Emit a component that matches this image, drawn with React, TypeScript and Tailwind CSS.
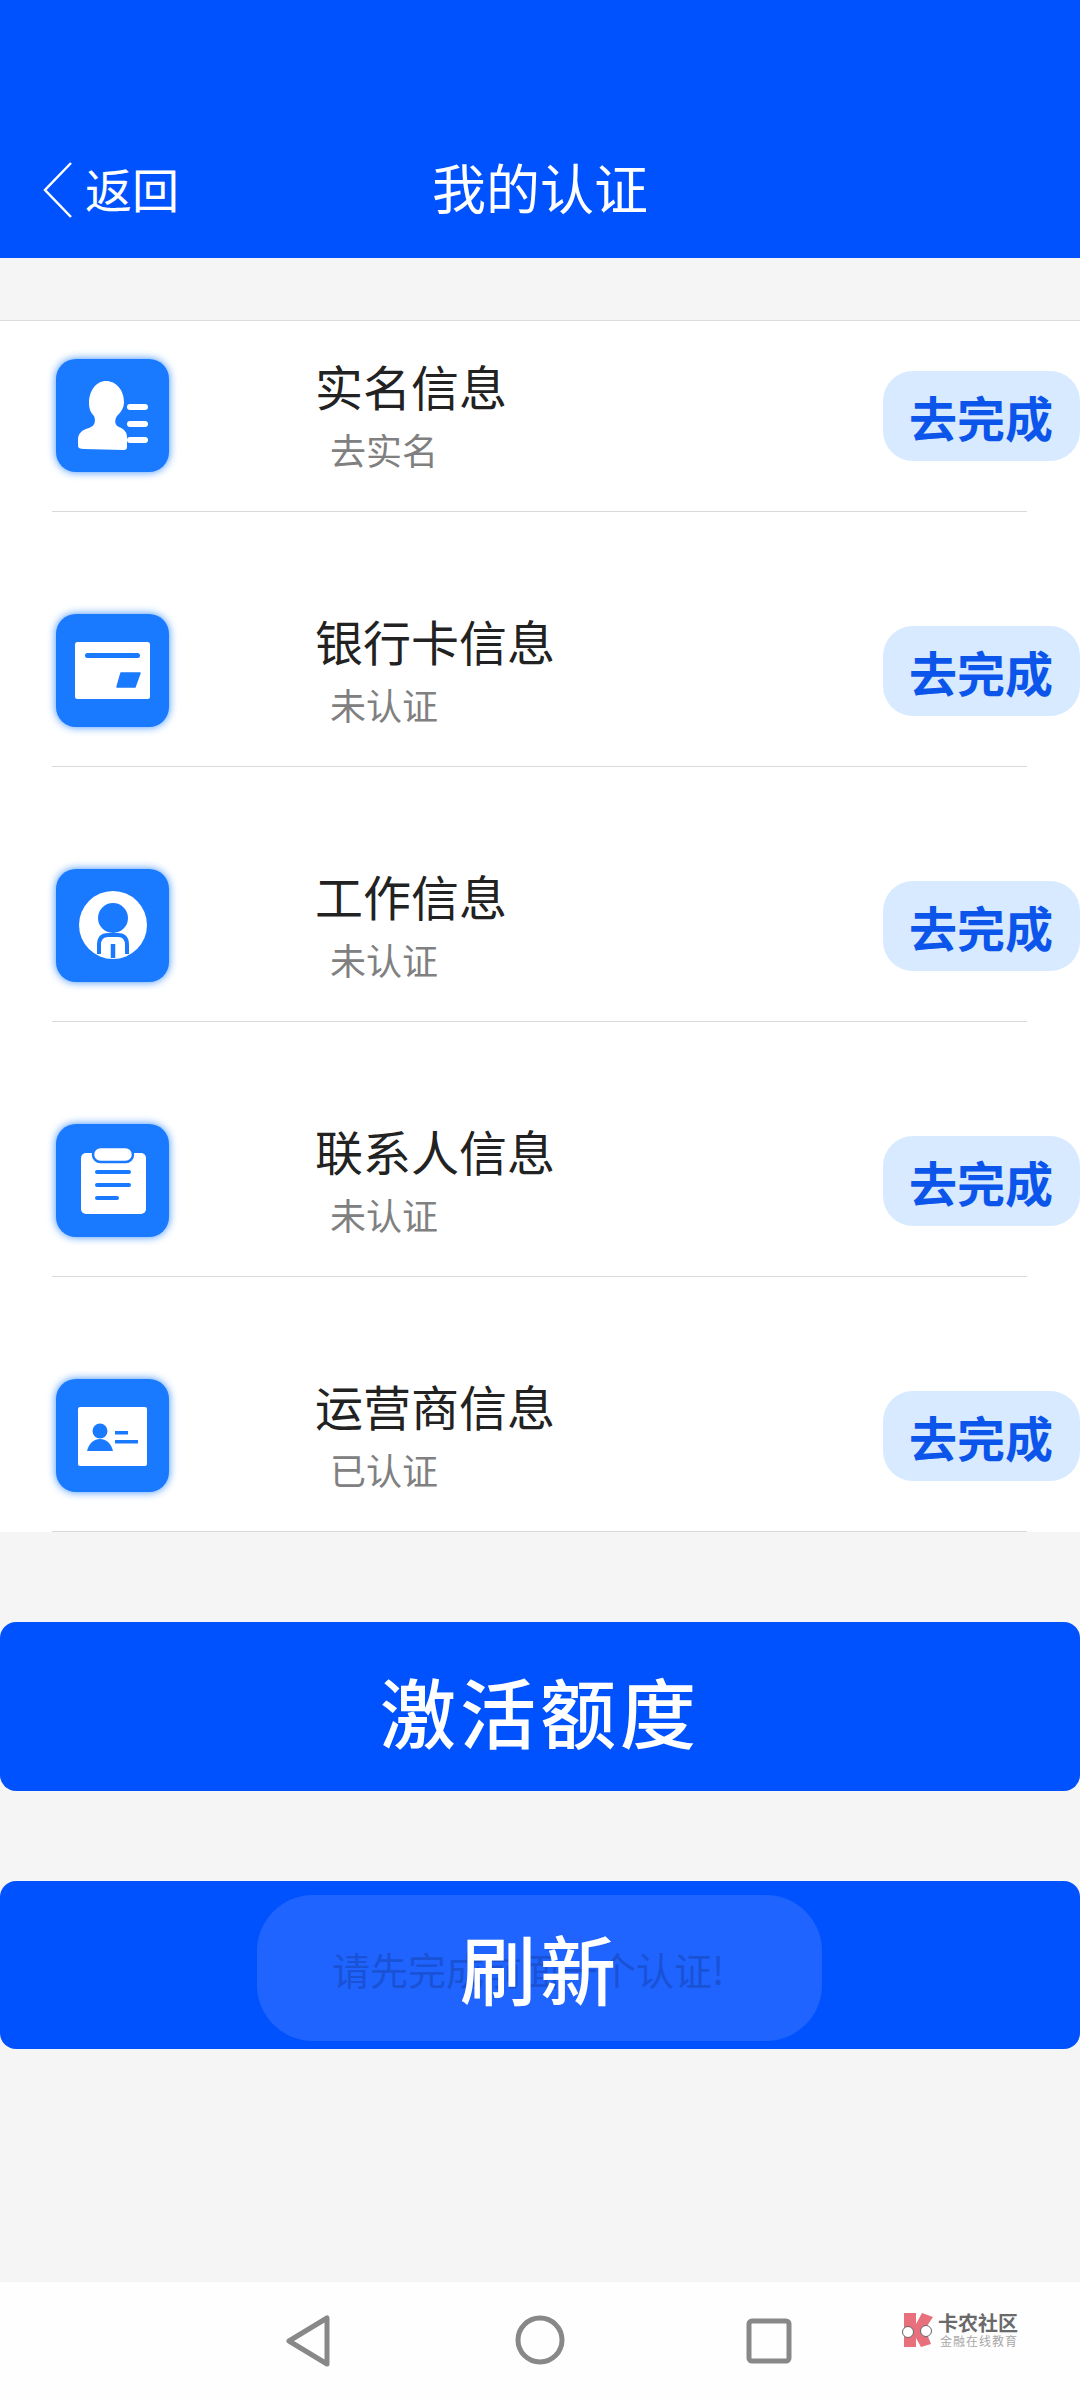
import React from 'react';

const BLUE = '#1a7aff';

const NameIcon = () => (
  <svg viewBox="0 0 113 113" className="w-full h-full">
    <path fill="#fff" d="M50 22C40 22 33 32 33 44C33 50 35 54 38 57C40 62 39 67 33 69C26 71 22 74 22 81V87Q22 90 28 90L68 91Q71 91 71 88V78C71 73 68 70 63 68C59 66 58 62 61 57C65 53 68 49 68 43C68 31 60 22 50 22Z" />
    <rect x="71" y="45" width="21" height="6" rx="3" fill="#fff" />
    <rect x="71" y="62" width="21" height="6" rx="3" fill="#fff" />
    <rect x="71" y="78" width="21" height="6" rx="3" fill="#fff" />
  </svg>
);

const CardIcon = () => (
  <svg viewBox="0 0 113 113" className="w-full h-full">
    <rect x="19" y="28" width="75" height="57" rx="2.5" fill="#fff" />
    <rect x="29" y="39" width="55" height="5" rx="2.5" fill={BLUE} />
    <path fill={BLUE} d="M65 59H84L79 73H61Z" strokeLinejoin="round" stroke={BLUE} strokeWidth="1.5" />
  </svg>
);

const WorkIcon = () => (
  <svg viewBox="0 0 113 113" className="w-full h-full">
    <circle cx="57" cy="56" r="34" fill="#fff" />
    <circle cx="57" cy="49" r="15" fill={BLUE} />
    <path fill="none" stroke={BLUE} strokeWidth="4" d="M43 85V76Q43 66 52 66H62Q71 66 71 76V85" />
    <path fill="none" stroke={BLUE} strokeWidth="4.5" d="M57 75V89" />
  </svg>
);

const ContactIcon = () => (
  <svg viewBox="0 0 113 113" className="w-full h-full">
    <rect x="25" y="29" width="65" height="61" rx="5" fill="#fff" />
    <rect x="37" y="23" width="40" height="15" rx="7.5" fill="#fff" stroke={BLUE} strokeWidth="2.5" />
    <rect x="39" y="46" width="36" height="4" rx="2" fill={BLUE} />
    <rect x="39" y="59" width="36" height="4" rx="2" fill={BLUE} />
    <rect x="39" y="72" width="24" height="4" rx="2" fill={BLUE} />
  </svg>
);

const CarrierIcon = () => (
  <svg viewBox="0 0 113 113" className="w-full h-full">
    <rect x="22" y="28" width="69" height="59" rx="2" fill="#fff" />
    <circle cx="44" cy="52" r="7.5" fill={BLUE} />
    <path fill={BLUE} d="M31 72C33 64 38 60 44 60C50 60 55 64 57 72Z" />
    <rect x="59" y="52" width="13" height="3.5" fill={BLUE} />
    <rect x="59" y="61" width="23" height="3.5" fill={BLUE} />
  </svg>
);

const rows = [
  { title: '实名信息', sub: '去实名', icon: <NameIcon /> },
  { title: '银行卡信息', sub: '未认证', icon: <CardIcon /> },
  { title: '工作信息', sub: '未认证', icon: <WorkIcon /> },
  { title: '联系人信息', sub: '未认证', icon: <ContactIcon /> },
  { title: '运营商信息', sub: '已认证', icon: <CarrierIcon /> },
];

function Row({ title, sub, icon }: { title: string; sub: string; icon: React.ReactNode }) {
  return (
    <div>
      <div className="flex items-center h-[190px] pl-[56px]">
        <div className="w-[113px] h-[113px] mb-[2px] rounded-[20px] bg-[#1a7aff] shadow-[0_0_8px_#3d8fff] shrink-0">
          {icon}
        </div>
        <div className="ml-[147px] mb-[6px] flex-1">
          <div className="text-[48px] leading-[64px] -ml-[1px] text-[#222]">{title}</div>
          <div className="text-[36px] leading-[48px] mt-[8px] ml-[14px] text-[#808080]">{sub}</div>
        </div>
        <div className="w-[197px] h-[90px] rounded-[30px] bg-[#d8eaff] flex items-center pl-[26px] text-[48px] font-bold text-[#0c55ea]">
          去完成
        </div>
      </div>
      <div className="ml-[52px] w-[975px] h-px bg-[#d9d9d9]" />
    </div>
  );
}

export default function App() {
  return (
    <div
      className="w-[1080px] h-[2400px] flex flex-col bg-[#f5f5f5] overflow-hidden"
      style={{ fontFamily: '"Noto Sans CJK SC", sans-serif' }}
    >
      {/* Header */}
      <div className="h-[258px] bg-[#0052fe] shrink-0 relative text-white">
        <div className="absolute left-[43px] top-[160px] flex items-center h-[60px]">
          <svg width="30" height="56" viewBox="0 0 30 56" fill="none" stroke="#fff" strokeWidth="2.5">
            <path d="M28 1L2 28L28 55" />
          </svg>
          <span className="ml-[12px] -mt-[5px] text-[47px] leading-none">返回</span>
        </div>
        <div className="absolute inset-x-0 top-[157px] h-[60px] flex items-center justify-center text-[54px] leading-none">
          我的认证
        </div>
      </div>

      {/* List */}
      <div className="mt-[62px] bg-white border-t border-[#dcdcdc] flex flex-col gap-[64px] shrink-0">
        {rows.map((r) => (
          <Row key={r.title} {...r} />
        ))}
      </div>

      {/* Buttons */}
      <button className="mt-[90px] h-[169px] rounded-[16px] bg-[#0052fe] text-white text-[76px] font-medium tracking-[4px] leading-none shrink-0 pt-[6px]">
        激活额度
      </button>
      <div className="relative mt-[90px] h-[168px] rounded-[16px] bg-[#0052fe] shrink-0 flex items-center justify-center">
        {/* Toast */}
        <div className="absolute left-[257px] top-[14px] w-[565px] h-[146px] rounded-[56px] bg-[#1f64ff] flex items-center pl-[75px] text-[38px] text-[#1a52d6] whitespace-nowrap">
          请先完成前面一个认证!
        </div>
        <span className="relative text-white text-[76px] font-medium tracking-[4px] leading-none mt-[4px]">刷新</span>
      </div>

      {/* Nav bar */}
      <div className="mt-auto h-[118px] bg-[#fefefe] shrink-0 relative flex items-start pl-[285px] pt-[33px] gap-[184px]">
        <svg width="46" height="52" viewBox="0 0 46 52" fill="none" stroke="#888" strokeWidth="5" strokeLinejoin="round">
          <path d="M42 3V49L4 26Z" />
        </svg>
        <svg width="50" height="50" viewBox="0 0 50 50" fill="none" stroke="#888" strokeWidth="5">
          <circle cx="25" cy="25" r="22" />
        </svg>
        <svg width="46" height="46" viewBox="0 0 46 46" fill="none" stroke="#888" strokeWidth="5" className="mt-[3px] -ml-[3px]">
          <rect x="3" y="3" width="40" height="40" rx="3" />
        </svg>

        {/* Watermark */}
        <div className="absolute left-[900px] top-[30px] flex items-center">
          <svg width="36" height="36" viewBox="0 0 36 36">
            <path fill="#e8707c" d="M4 1H16V12L22 1L33 5L25 17L31 32L21 35L16 26V35H4Z" />
            <circle cx="8" cy="20" r="5.5" fill="#fff" stroke="#666" strokeWidth="1" />
            <circle cx="26" cy="19" r="5.5" fill="#fff" stroke="#666" strokeWidth="1" />
          </svg>
          <div className="ml-[2px]">
            <div className="text-[20px] leading-[22px] font-bold text-[#6a6a6a] whitespace-nowrap">卡农社区</div>
            <div className="text-[12px] leading-[14px] tracking-[1px] ml-[2px] text-[#a8a8a8] whitespace-nowrap">金融在线教育</div>
          </div>
        </div>
      </div>
    </div>
  );
}
